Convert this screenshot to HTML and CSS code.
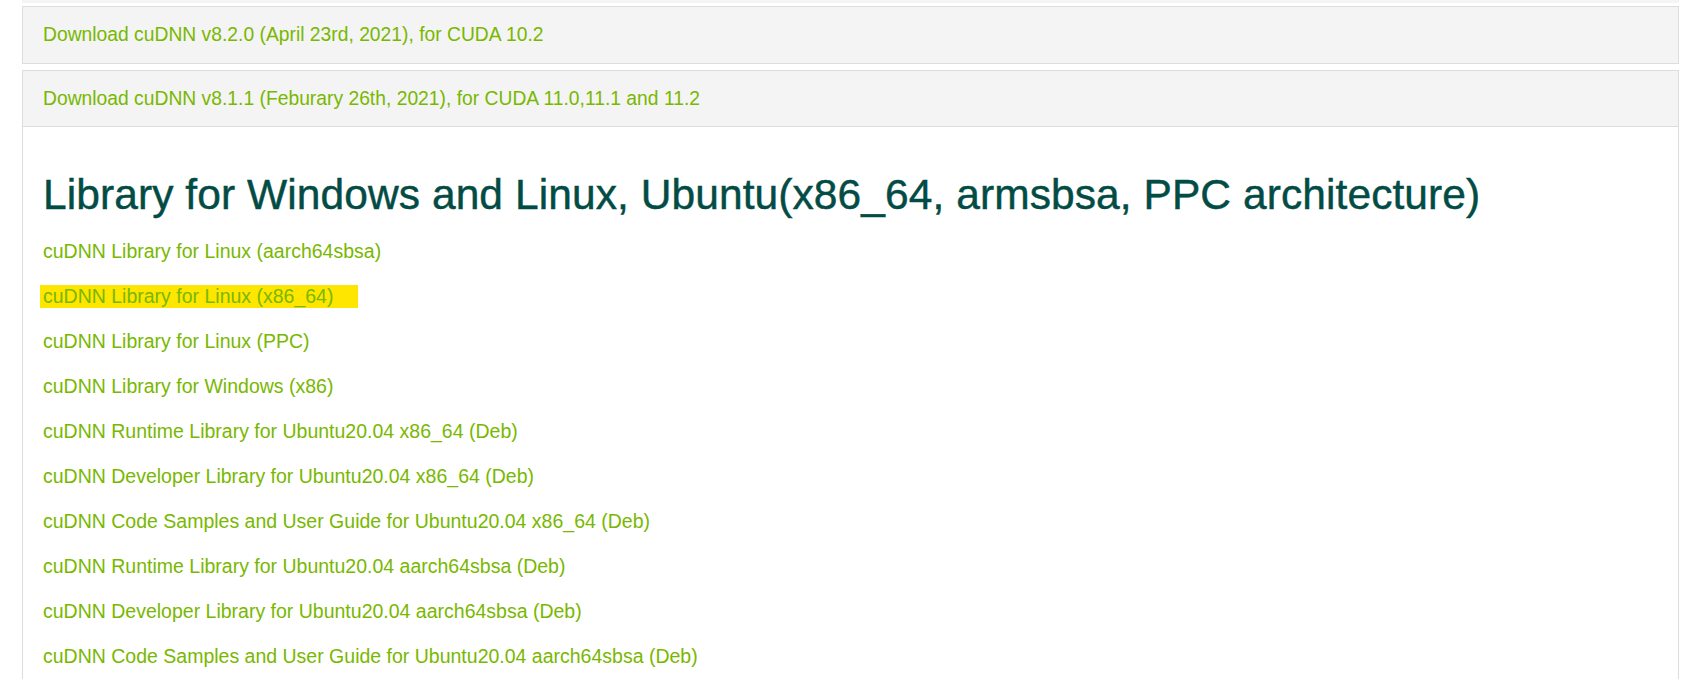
FILE: index.html
```html
<!DOCTYPE html>
<html lang="en">
<head>
<meta charset="utf-8">
<title>cuDNN Archive</title>
<link rel="stylesheet" href="styles.css">
</head>
<body>
<div class="accordion">
  <div class="prev-edge"></div>
  <div class="panel">
    <div class="panel-head"><a href="#">Download cuDNN v8.2.0 (April 23rd, 2021), for CUDA 10.2</a></div>
  </div>
  <div class="panel open">
    <div class="panel-head"><a href="#">Download cuDNN v8.1.1 (Feburary 26th, 2021), for CUDA 11.0,11.1 and 11.2</a></div>
    <div class="panel-body">
      <h2 class="section-title">Library for Windows and Linux, Ubuntu(x86_64, armsbsa, PPC architecture)</h2>
      <ul class="links">
        <li><a href="#">cuDNN Library for Linux (aarch64sbsa)</a></li>
        <li><span class="highlight"><a href="#">cuDNN Library for Linux (x86_64)</a></span></li>
        <li><a href="#">cuDNN Library for Linux (PPC)</a></li>
        <li><a href="#">cuDNN Library for Windows (x86)</a></li>
        <li><a href="#">cuDNN Runtime Library for Ubuntu20.04 x86_64 (Deb)</a></li>
        <li><a href="#">cuDNN Developer Library for Ubuntu20.04 x86_64 (Deb)</a></li>
        <li><a href="#">cuDNN Code Samples and User Guide for Ubuntu20.04 x86_64 (Deb)</a></li>
        <li><a href="#">cuDNN Runtime Library for Ubuntu20.04 aarch64sbsa (Deb)</a></li>
        <li><a href="#">cuDNN Developer Library for Ubuntu20.04 aarch64sbsa (Deb)</a></li>
        <li><a href="#">cuDNN Code Samples and User Guide for Ubuntu20.04 aarch64sbsa (Deb)</a></li>
      </ul>
    </div>
  </div>
</div>
</body>
</html>
```
FILE: styles.css
```css
html, body {
  margin: 0;
  padding: 0;
  background: #ffffff;
}

body {
  font-family: "Liberation Sans", Arial, sans-serif;
  overflow: hidden;
}

a {
  color: #78b800;
  text-decoration: none;
}

.accordion {
  margin: 0 27px 0 22px;
}

.prev-edge {
  height: 3px;
  background: #f5f5f5;
  margin-bottom: 3px;
}

.panel {
  border: 1px solid #dddddd;
  margin-bottom: 6px;
}

.panel.open {
  margin-bottom: 0;
}

.panel-head {
  background: #f4f4f4;
  padding: 0 20px;
  font-size: 19.3px;
  line-height: 56px;
  height: 56px;
}

.panel.open .panel-head {
  height: 55px;
  line-height: 55px;
  border-bottom: 1px solid #dddddd;
}

.panel-body {
  background: #ffffff;
  padding: 44px 20px 40px;
}

.section-title {
  margin: 0 0 21px;
  font-size: 42.5px;
  line-height: 48px;
  font-weight: normal;
  letter-spacing: 0.08px;
  color: #034c45;
  -webkit-text-stroke: 0.45px #034c45;
}

.links {
  list-style: none;
  margin: 0;
  padding: 0;
  display: flex;
  flex-direction: column;
  gap: 22px;
}

.links li {
  font-size: 19.5px;
  line-height: 23px;
  height: 23px;
}

.highlight {
  display: inline-block;
  width: 318px;
  box-sizing: border-box;
  margin-left: -3px;
  padding-left: 3px;
  background: #ffe600;
}
```
